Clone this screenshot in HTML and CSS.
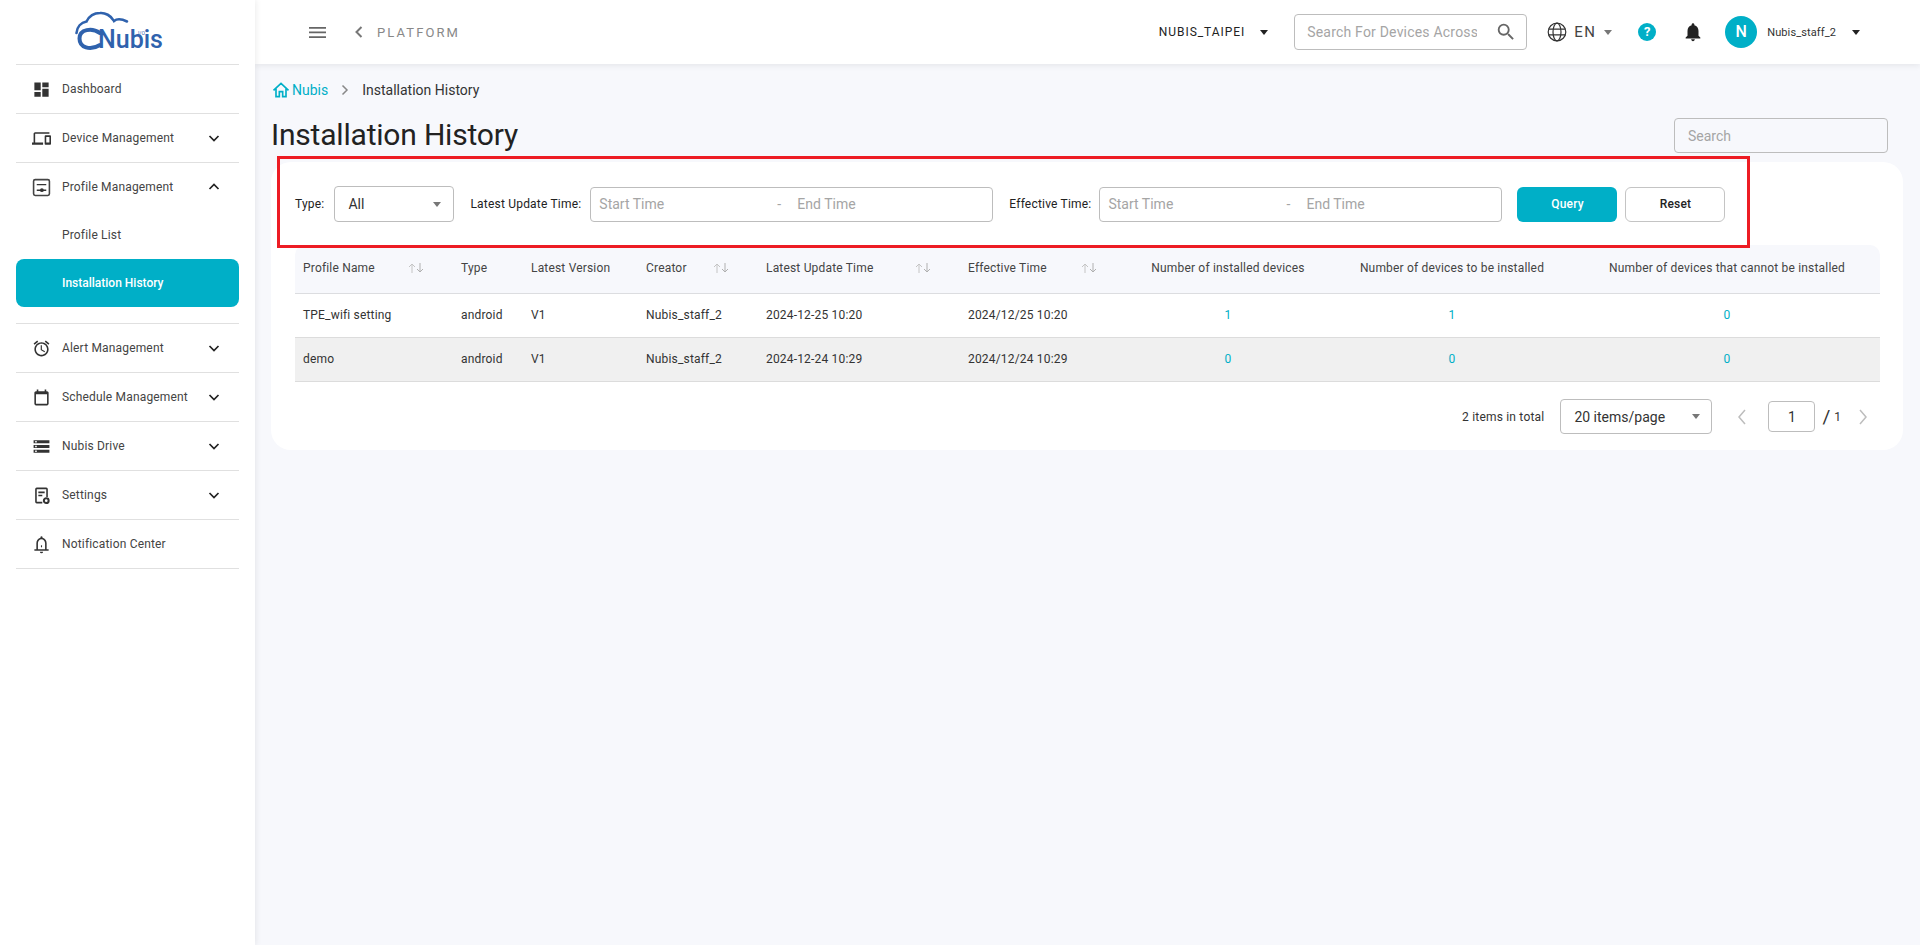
FILE: index.html
```html
<!DOCTYPE html>
<html lang="en">
<head>
<meta charset="utf-8">
<title>Installation History</title>
<link rel="stylesheet" href="styles.css">
</head>
<body>
<div class="app">
  <aside class="sidebar">
    <div class="logo">
      <svg class="logo-cloud" width="100" height="48" viewBox="0 0 100 48"><path d="M57 13.500C52 11 47 10.500 44 13C41 7.500 35 4.500 30 5C24 5 19 8.500 16.500 13.500C11 14.500 7 19 6.500 25" fill="none" stroke="#2f62ad" stroke-width="2.600" stroke-linecap="round"/><path d="M30 25C22 19.500 9.500 21 9.500 30.500C9.500 39.500 20 43 30 37" fill="none" stroke="#2f62ad" stroke-width="4" stroke-linecap="round"/></svg>
      <span class="logo-text">Nubis</span>
      <span class="logo-io">I/O</span>
    </div>
    <nav>
      <div class="nav-item">
        <svg class="nav-icon" viewBox="0 0 24 24"><path d="M3 13h8V3H3v10zm0 8h8v-6H3v6zm10 0h8V11h-8v10zm0-18v6h8V3h-8z"/></svg>
        <span class="nav-label">Dashboard</span>
      </div>
      <div class="nav-item">
        <svg class="nav-icon" viewBox="0 0 24 24"><path d="M4 6h18V4H4c-1.100 0-2 .9-2 2v11H0v3h14v-3H4V6zm19 2h-6c-.55 0-1 .45-1 1v10c0 .55.45 1 1 1h6c.55 0 1-.45 1-1V9c0-.55-.45-1-1-1zm-1 9h-4v-7h4v7z"/></svg>
        <span class="nav-label">Device Management</span>
        <svg class="nav-chevron" viewBox="0 0 12 12"><path d="M1.500 4L6 8.500 10.500 4"/></svg>
      </div>
      <div class="nav-group">
        <div class="nav-item nav-item-open">
          <svg class="nav-icon" viewBox="0 0 24 24"><rect x="2" y="2" width="20" height="20" rx="2" fill="none" stroke="#444" stroke-width="2"/><path d="M6 7.500h12v1.800H6zM6 14.500h12v1.800H6z"/><circle cx="12.500" cy="15.400" r="2.400"/></svg>
          <span class="nav-label">Profile Management</span>
          <svg class="nav-chevron" viewBox="0 0 12 12"><path d="M1.500 8L6 3.500 10.500 8"/></svg>
        </div>
        <div class="nav-sub">Profile List</div>
        <div class="nav-sub nav-sub-active">Installation History</div>
      </div>
      <div class="nav-item">
        <svg class="nav-icon" viewBox="0 0 24 24"><path d="M22 5.720l-4.600-3.860-1.290 1.530 4.600 3.860L22 5.720zM7.880 3.390L6.600 1.860 2 5.710l1.290 1.530 4.590-3.850zM12.500 8H11v6l4.750 2.850.75-1.230-4-2.370V8zM12 4c-4.970 0-9 4.030-9 9s4.020 9 9 9c4.970 0 9-4.030 9-9s-4.030-9-9-9zm0 16c-3.870 0-7-3.130-7-7s3.130-7 7-7 7 3.130 7 7-3.130 7-7 7z"/></svg>
        <span class="nav-label">Alert Management</span>
        <svg class="nav-chevron" viewBox="0 0 12 12"><path d="M1.500 4L6 8.500 10.500 4"/></svg>
      </div>
      <div class="nav-item">
        <svg class="nav-icon" viewBox="0 0 24 24"><path d="M19 4h-1V2h-2v2H8V2H6v2H5C3.900 4 3 4.900 3 6v14c0 1.100.9 2 2 2h14c1.100 0 2-.9 2-2V6c0-1.100-.9-2-2-2zm0 16H5V8h14v12z"/></svg>
        <span class="nav-label">Schedule Management</span>
        <svg class="nav-chevron" viewBox="0 0 12 12"><path d="M1.500 4L6 8.500 10.500 4"/></svg>
      </div>
      <div class="nav-item">
        <svg class="nav-icon" viewBox="0 0 24 24"><path d="M2 20h20v-4H2v4zm2-3h2v2H4v-2zM2 4v4h20V4H2zm4 3H4V5h2v2zm-4 7h20v-4H2v4zm2-3h2v2H4v-2z"/></svg>
        <span class="nav-label">Nubis Drive</span>
        <svg class="nav-chevron" viewBox="0 0 12 12"><path d="M1.500 4L6 8.500 10.500 4"/></svg>
      </div>
      <div class="nav-item">
        <svg class="nav-icon" viewBox="0 0 24 24"><path d="M13 22H6a2 2 0 0 1-2-2V4a2 2 0 0 1 2-2h12a2 2 0 0 1 2 2v10h-2V4H6v16h7z"/><path d="M8 7h8v2H8zM8 11h5v2H8z"/><circle cx="18" cy="18.500" r="3" fill="none" stroke="#333" stroke-width="2.600"/></svg>
        <span class="nav-label">Settings</span>
        <svg class="nav-chevron" viewBox="0 0 12 12"><path d="M1.500 4L6 8.500 10.500 4"/></svg>
      </div>
      <div class="nav-item">
        <svg class="nav-icon" viewBox="0 0 24 24"><path d="M12 1.500a1.300 1.300 0 0 0-1.300 1.300v.7C7.500 4.200 5.500 7 5.500 10.500V18H3v2h18v-2h-2.500v-7.500c0-3.500-2-6.300-5.200-7v-.7A1.300 1.300 0 0 0 12 1.500zM7.500 18v-7.500c0-3 2-5.100 4.500-5.100s4.500 2.100 4.500 5.100V18z"/><path d="M10 21.200h4a2 2 0 0 1-4 0z"/><path d="M11.300 13h1.400v2.500h-1.400z"/></svg>
        <span class="nav-label">Notification Center</span>
      </div>
    </nav>
  </aside>

  <div class="main">
    <header class="topbar">
      <svg class="hamburger" viewBox="0 0 17 11"><path d="M0 0h17v1.700H0zM0 4.600h17v1.700H0zM0 9.200h17v1.700H0z"/></svg>
      <svg class="back" viewBox="0 0 8 12"><path d="M6.500 1L1.500 6l5 5"/></svg>
      <span class="platform">PLATFORM</span>
      <div class="top-right">
        <span class="org">NUBIS_TAIPEI</span>
        <span class="caret caret-dark org-caret"></span>
        <div class="device-search">
          <span class="device-search-ph">Search For Devices Across</span>
          <svg class="search-icon" viewBox="0 0 24 24"><path d="M15.500 14h-.79l-.28-.27A6.470 6.470 0 0 0 16 9.500 6.500 6.500 0 1 0 9.500 16c1.610 0 3.090-.59 4.230-1.570l.27.28v.79l5 4.990L20.490 19l-4.990-5zm-6 0C7.010 14 5 11.990 5 9.500S7.010 5 9.500 5 14 7.010 14 9.500 11.990 14 9.500 14z"/></svg>
        </div>
        <svg class="globe" viewBox="0 0 20 20"><circle cx="10" cy="10" r="8.800"/><ellipse cx="10" cy="10" rx="4" ry="8.800"/><path d="M1.500 7.200h17M1.500 12.800h17"/></svg>
        <span class="lang">EN</span>
        <span class="caret caret-grey lang-caret"></span>
        <span class="help">?</span>
        <svg class="bell" viewBox="0 0 24 24"><path d="M12 22c1.100 0 2-.9 2-2h-4c0 1.100.9 2 2 2zm6-6v-5c0-3.070-1.630-5.640-4.500-6.320V4c0-.83-.67-1.500-1.500-1.500s-1.500.67-1.500 1.500v.68C7.640 5.360 6 7.920 6 11v5l-2 2v1h16v-1l-2-2z"/></svg>
        <span class="avatar">N</span>
        <span class="user">Nubis_staff_2</span>
        <span class="caret caret-dark user-caret"></span>
      </div>
    </header>

    <main class="content">
      <div class="breadcrumb">
        <svg class="home" viewBox="0 0 24 24"><path d="M3 12.500L12 4l9 8.500M6 10.500V20h4v-6h4v6h4v-9.500"/></svg>
        <span class="crumb-link">Nubis</span>
        <svg class="crumb-sep" viewBox="0 0 8 12"><path d="M1.500 1.500L6 6l-4.500 4.500"/></svg>
        <span class="crumb-current">Installation History</span>
      </div>
      <div class="title-row">
        <h1 class="title">Installation History</h1>
        <div class="field page-search"><span class="ph">Search</span></div>
      </div>
      <section class="card">
        <div class="filters">
          <label class="filter-label">Type:</label>
          <div class="field type-select"><span>All</span><span class="caret caret-grey"></span></div>
          <label class="filter-label label-update">Latest Update Time:</label>
          <div class="field range">
            <span class="ph range-start">Start Time</span><span class="ph range-dash">-</span><span class="ph">End Time</span>
          </div>
          <label class="filter-label label-effective">Effective Time:</label>
          <div class="field range">
            <span class="ph range-start">Start Time</span><span class="ph range-dash">-</span><span class="ph">End Time</span>
          </div>
          <button class="btn btn-primary">Query</button>
          <button class="btn btn-plain">Reset</button>
        </div>
        <table class="grid">
          <colgroup>
            <col class="c1"><col class="c2"><col class="c3"><col class="c4"><col class="c5"><col class="c6"><col class="c7"><col class="c8"><col class="c9">
          </colgroup>
          <thead>
            <tr>
              <th><div class="th-sort">Profile Name<svg class="sort" viewBox="0 0 16 12"><path d="M4 11V2M1 5l3-3 3 3"/><path class="sort-d" d="M12 1v9M9 7l3 3 3-3"/></svg></div></th>
              <th>Type</th>
              <th>Latest Version</th>
              <th><div class="th-sort">Creator<svg class="sort" viewBox="0 0 16 12"><path d="M4 11V2M1 5l3-3 3 3"/><path class="sort-d" d="M12 1v9M9 7l3 3 3-3"/></svg></div></th>
              <th><div class="th-sort">Latest Update Time<svg class="sort" viewBox="0 0 16 12"><path d="M4 11V2M1 5l3-3 3 3"/><path class="sort-d" d="M12 1v9M9 7l3 3 3-3"/></svg></div></th>
              <th><div class="th-sort">Effective Time<svg class="sort" viewBox="0 0 16 12"><path d="M4 11V2M1 5l3-3 3 3"/><path class="sort-d" d="M12 1v9M9 7l3 3 3-3"/></svg></div></th>
              <th class="center">Number of installed devices</th>
              <th class="center">Number of devices to be installed</th>
              <th class="center">Number of devices that cannot be installed</th>
            </tr>
          </thead>
          <tbody>
            <tr>
              <td>TPE_wifi setting</td><td>android</td><td>V1</td><td>Nubis_staff_2</td><td>2024-12-25 10:20</td><td>2024/12/25 10:20</td>
              <td class="center num">1</td><td class="center num">1</td><td class="center num">0</td>
            </tr>
            <tr class="row-alt">
              <td>demo</td><td>android</td><td>V1</td><td>Nubis_staff_2</td><td>2024-12-24 10:29</td><td>2024/12/24 10:29</td>
              <td class="center num">0</td><td class="center num">0</td><td class="center num">0</td>
            </tr>
          </tbody>
        </table>
        <div class="pager">
          <span class="pager-total">2 items in total</span>
          <div class="field pager-size"><span>20 items/page</span><span class="caret caret-grey"></span></div>
          <svg class="pager-arrow pager-prev" viewBox="0 0 10 16"><path d="M8 1L2 8l6 7"/></svg>
          <div class="field pager-page">1</div>
          <span class="pager-slash">/</span>
          <span class="pager-count">1</span>
          <svg class="pager-arrow pager-next" viewBox="0 0 10 16"><path d="M2 1l6 7-6 7"/></svg>
        </div>
      </section>
    </main>
  </div>
</div>
<div class="annotation"></div>
</body>
</html>
```
FILE: styles.css
```css
* { box-sizing: border-box; }
html, body { height: 100%; }
body { margin: 0; font-family: Roboto, "Liberation Sans", sans-serif; color: #333; background: #f7f8fc; overflow: hidden; }
.app { display: flex; height: 945px; }

/* sidebar */
.sidebar { width: 255px; flex: none; background: #fff; padding: 0 16px; box-shadow: 1px 0 6px rgba(0,0,0,.08); position: relative; z-index: 2; }
.logo { height: 65px; position: relative; border-bottom: 1px solid #e0e0e0; }
.logo-cloud { position: absolute; left: 54px; top: 8px; }
.logo-text { position: absolute; left: 82px; top: 31px; font-size: 25px; line-height: 18px; font-weight: 500; color: #2f62ad; }
.logo-io { position: absolute; left: 122px; top: 30px; font-size: 5px; line-height: 6px; color: #2f62ad; }
.nav-item { height: 49px; display: flex; align-items: center; border-bottom: 1px solid #e0e0e0; padding-left: 16px; }
.nav-item-open { border-bottom: 0; height: 48px; }
.nav-group { border-bottom: 1px solid #e0e0e0; padding-bottom: 16px; }
.nav-icon { width: 19px; height: 19px; flex: none; fill: #333; }
.nav-label { margin-left: 11px; font-size: 12px; letter-spacing: .17px; flex: 1; color: #444; }
.nav-chevron { width: 12px; height: 12px; flex: none; margin-right: 19px; fill: none; stroke: #222; stroke-width: 1.700; }
.nav-sub { height: 48px; padding-left: 46px; display: flex; align-items: center; font-size: 12px; letter-spacing: .17px; color: #444; }
.nav-sub-active { background: #00afc7; color: #fff; border-radius: 8px; font-weight: 500; letter-spacing: 0; }

/* topbar */
.main { flex: 1; min-width: 0; display: flex; flex-direction: column; }
.topbar { height: 64px; flex: none; background: #fff; display: flex; align-items: center; padding-left: 54px; box-shadow: 0 2px 6px rgba(0,0,0,.07); position: relative; z-index: 1; }
.hamburger { width: 17px; height: 11px; fill: #666; }
.back { width: 8px; height: 12px; margin-left: 29px; fill: none; stroke: #777; stroke-width: 2; }
.platform { margin-left: 14px; font-size: 13px; letter-spacing: 2.100px; color: #888; }
.top-right { margin-left: auto; display: flex; align-items: center; padding-right: 60px; }
.org { font-size: 12px; letter-spacing: .95px; color: #222; }
.caret { display: inline-block; width: 0; height: 0; border-left: 4px solid transparent; border-right: 4px solid transparent; border-top: 5px solid #333; }
.caret-dark { border-top-color: #222; }
.caret-grey { border-top-color: #777; }
.org-caret { margin-left: 15px; }
.device-search { width: 233px; height: 36px; margin-left: 26px; border: 1px solid #bdbdbd; border-radius: 4px; display: flex; align-items: center; padding: 0 9px 0 12px; justify-content: space-between; background: #fff; }
.device-search-ph { font-size: 14px; letter-spacing: .2px; color: #a5a5a5; width: 170px; overflow: hidden; white-space: nowrap; }
.search-icon { width: 22px; height: 22px; fill: #666; }
.globe { width: 20px; height: 20px; margin-left: 20px; fill: none; stroke: #333; stroke-width: 1.200; }
.lang { margin-left: 7px; width: 22px; font-size: 15px; letter-spacing: 1.400px; color: #444; white-space: nowrap; }
.lang-caret { margin-left: 8px; border-left-width: 4.500px; border-right-width: 4.500px; }
.help { width: 18px; height: 18px; margin-left: 26px; border-radius: 50%; background: #00afc7; color: #fff; font-size: 13px; font-weight: 700; line-height: 18px; text-align: center; }
.bell { width: 22px; height: 22px; margin-left: 26px; fill: #222; }
.avatar { width: 32px; height: 32px; margin-left: 21px; border-radius: 50%; background: #00afc7; color: #fff; font-size: 16px; font-weight: 500; line-height: 32px; text-align: center; }
.user { margin-left: 10px; font-size: 11px; letter-spacing: .1px; color: #333; }
.user-caret { margin-left: 16px; }

/* content */
.content { flex: 1; padding: 0 17px 0 16px; min-height: 0; }
.breadcrumb { height: 20px; margin-top: 16px; display: flex; align-items: center; }
.home { width: 20px; height: 20px; fill: none; stroke: #00afc7; stroke-width: 2; }
.crumb-link { margin-left: 1px; font-size: 14px; color: #00afc7; }
.crumb-sep { width: 8px; height: 12px; margin-left: 13px; fill: none; stroke: #888; stroke-width: 1.500; }
.crumb-current { margin-left: 13px; font-size: 14px; color: #333; }
.title-row { height: 62px; display: flex; justify-content: space-between; padding-top: 16px; }
.title { margin: 0; font-size: 30px; line-height: 38px; font-weight: 400; letter-spacing: -.2px; color: #222; }
.field { border: 1px solid #bdbdbd; border-radius: 4px; background: #fff; display: flex; align-items: center; font-size: 14px; }
.ph { color: #a5a5a5; font-size: 14px; }
.page-search { width: 214px; height: 35px; margin: 2px 15px 0 0; padding-left: 13px; background: #f7f8fc; }

.card { background: #fff; border-radius: 20px; height: 288px; padding: 24px 24px 0; }
.filters { display: flex; align-items: center; height: 36px; }
.filter-label { font-size: 12px; letter-spacing: .2px; color: #222; white-space: nowrap; }
.type-select { width: 120px; height: 36px; margin-left: 10px; padding: 0 12px 0 13px; justify-content: space-between; color: #333; }
.label-update { margin-left: 16px; }
.label-effective { margin-left: 16px; }
.range { width: 403px; height: 35px; margin-left: 9px; padding: 0 0 1px 8px; }
.label-effective + .range { margin-left: 8px; }
.range-start { width: 178px; }
.range-dash { width: 20px; }
.btn { height: 35px; width: 100px; border-radius: 6px; font: 500 12px Roboto, "Liberation Sans", sans-serif; letter-spacing: .2px; cursor: pointer; }
.btn-primary { margin-left: 15px; background: #00afc7; border: 0; color: #fff; }
.btn-plain { margin-left: 8px; background: #fff; border: 1px solid #c4c4c4; color: #222; }

/* table */
.grid { width: 1585px; margin-top: 23px; border-collapse: separate; border-spacing: 0; table-layout: fixed; font-size: 12px; letter-spacing: .18px; }
.c1 { width: 158px; } .c2 { width: 70px; } .c3 { width: 115px; } .c4 { width: 120px; } .c5 { width: 202px; } .c6 { width: 166px; } .c7 { width: 204px; } .c8 { width: 244px; } .c9 { width: 306px; }
.grid th { height: 49px; background: #f7f8fc; border-bottom: 1px solid #dcdde0; padding: 0 0 2px 8px; text-align: left; font-weight: 400; color: #444; white-space: nowrap; }
.grid th:first-child { border-top-left-radius: 10px; }
.grid th:last-child { border-top-right-radius: 10px; }
.grid td { height: 44px; border-bottom: 1px solid #dcdcdc; padding: 0 0 2px 8px; color: #333; white-space: nowrap; }
.grid .center { text-align: center; padding: 0 0 2px; }
.grid .num { color: #00afc7; }
.row-alt td { background: #f0f0f0; }
.th-sort { display: flex; justify-content: space-between; align-items: center; padding-right: 29px; }
.sort { width: 16px; height: 12px; fill: none; stroke: #c4c4c4; stroke-width: 1; }
.sort-d { stroke: #b0b0b0; }

/* pager */
.pager { display: flex; align-items: center; justify-content: flex-end; height: 35px; margin-top: 17px; padding-right: 11px; }
.pager-total { font-size: 12px; letter-spacing: .2px; color: #333; }
.pager-size { width: 152px; height: 35px; margin-left: 16px; padding: 0 11px 0 13px; justify-content: space-between; color: #333; }
.pager-arrow { width: 10px; height: 16px; fill: none; stroke: #bdbdbd; stroke-width: 1.500; }
.pager-prev { margin-left: 25px; }
.pager-page { width: 47px; height: 31px; margin-left: 21px; justify-content: center; }
.pager-slash { margin-left: 7px; font-size: 19px; color: #333; }
.pager-count { margin-left: 4px; font-size: 12px; color: #333; }
.pager-next { margin-left: 17px; }

/* review annotation drawn over the page */
.annotation { position: absolute; left: 277px; top: 156px; width: 1473px; height: 92px; border: 3px solid #ed1c24; pointer-events: none; z-index: 5; }
```
